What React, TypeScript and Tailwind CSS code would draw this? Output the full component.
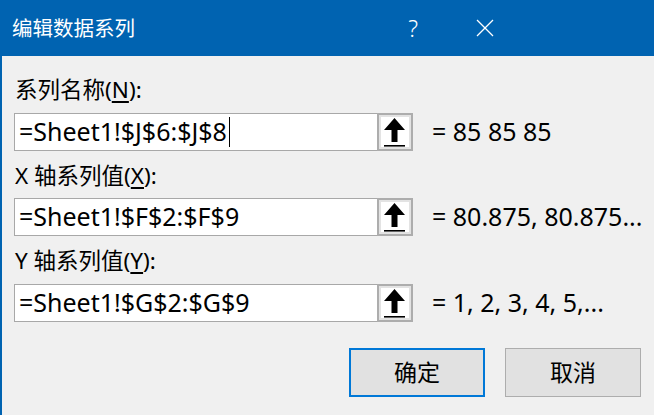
import React from "react";

const FONT = { fontFamily: '"Noto Sans", "Noto Sans CJK SC", sans-serif' };

function ArrowButton() {
  return (
    <div className="w-[36px] h-[38px] border-2 border-[#adadad] bg-[#e3e3e3] p-[2px] -ml-[1px] shrink-0">
      <div className="w-full h-full bg-white">
        <svg width="28" height="30" viewBox="0 0 28 30" className="block">
          <polygon points="13.5,1 3,13 10.5,13 10.5,25 16.5,25 16.5,13 24,13" fill="#000" />
          <rect x="3" y="28" width="21" height="1.6" fill="#000" />
        </svg>
      </div>
    </div>
  );
}

function Row({
  label,
  value,
  result,
  cursor,
  labelMt,
  inputMt,
}: {
  label: React.ReactNode;
  value: string;
  result: string;
  cursor?: boolean;
  labelMt: string;
  inputMt: string;
}) {
  return (
    <>
      <div className={`${labelMt} h-[30px] leading-[30px] pl-[13px] text-[22.5px] text-black whitespace-nowrap`}>
        {label}
      </div>
      <div className={`${inputMt} flex items-center pl-[12px]`}>
        <div className="w-[364px] h-[38px] border border-[#a8a8a8] bg-white flex items-center pl-[4px] text-[25px] text-black whitespace-nowrap overflow-hidden">
          <span>{value}</span>
          {cursor && <span className="inline-block w-[1px] h-[30px] bg-black ml-[2px]" />}
        </div>
        <ArrowButton />
        <div className="ml-[19px] text-[25px] text-black whitespace-nowrap">{result}</div>
      </div>
    </>
  );
}

export default function App() {
  return (
    <div className="w-[654px] h-[415px] flex flex-col bg-[#f0f0f0] overflow-hidden" style={FONT}>
      <div className="h-[56px] bg-[#0063b1] flex items-center text-white shrink-0">
        <div className="pl-[12px] text-[20.5px] flex-1 whitespace-nowrap">编辑数据系列</div>
        <div className="text-[23px] font-light mr-[58px]">?</div>
        <svg width="18" height="18" viewBox="0 0 18 18" className="mr-[160px]">
          <line x1="1" y1="1" x2="17" y2="17" stroke="#fff" strokeWidth="1.3" />
          <line x1="17" y1="1" x2="1" y2="17" stroke="#fff" strokeWidth="1.3" />
        </svg>
      </div>
      <div className="flex-1 flex">
        <div className="w-[2px] bg-[#0063b1] shrink-0" />
        <div className="flex-1 flex flex-col">
          <Row
            labelMt="mt-[19px]"
            inputMt="mt-[8px]"
            label={
              <>
                系列名称(<span className="underline underline-offset-[3px]">N</span>):
              </>
            }
            value="=Sheet1!$J$6:$J$8"
            result="= 85 85 85"
            cursor
          />
          <Row
            labelMt="mt-[10px]"
            inputMt="mt-[7px]"
            label={
              <>
                X 轴系列值(<span className="underline underline-offset-[3px]">X</span>):
              </>
            }
            value="=Sheet1!$F$2:$F$9"
            result="= 80.875, 80.875..."
          />
          <Row
            labelMt="mt-[10px]"
            inputMt="mt-[8px]"
            label={
              <>
                Y 轴系列值(<span className="underline underline-offset-[3px]">Y</span>):
              </>
            }
            value="=Sheet1!$G$2:$G$9"
            result="= 1, 2, 3, 4, 5,..."
          />
          <div className="mt-[26px] flex justify-end gap-[20px] pr-[13px]">
            <div className="w-[136px] h-[49px] border-2 border-[#0078d7] bg-[#e1e1e1] flex items-center justify-center text-[23px] text-black">
              确定
            </div>
            <div className="w-[136px] h-[49px] border border-[#adadad] bg-[#e1e1e1] flex items-center justify-center text-[23px] text-black">
              取消
            </div>
          </div>
        </div>
      </div>
    </div>
  );
}
